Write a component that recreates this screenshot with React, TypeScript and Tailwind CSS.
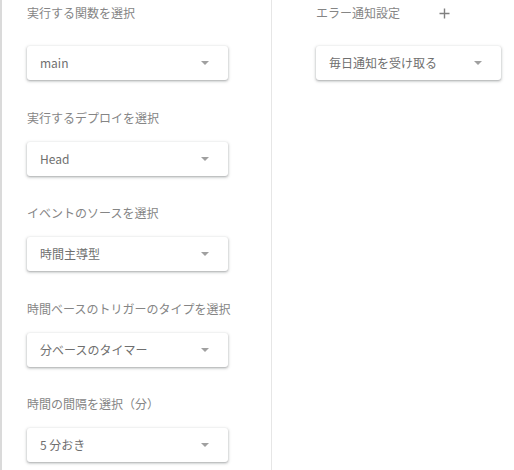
import React from "react";

const font = { fontFamily: '"Noto Sans CJK JP", "Noto Sans", sans-serif' };

function Select({ value, width }: { value: string; width: string }) {
  return (
    <div
      className={`${width} h-[34px] flex items-center justify-between rounded-[3px] bg-white pl-[13px] pr-[19px] shadow-[0_1px_2px_rgba(60,64,67,0.3),0_1px_3px_1px_rgba(60,64,67,0.15)]`}
    >
      <span className="text-[12px] leading-[16px] text-[#6f6f6f]">{value}</span>
      <span className="w-0 h-0 border-l-[4px] border-r-[4px] border-t-[4px] border-l-transparent border-r-transparent border-t-[#a0a0a0]" />
    </div>
  );
}

function Label({ children }: { children: React.ReactNode }) {
  return <div className="text-[12px] leading-[16px] text-[#858585]">{children}</div>;
}

export default function App() {
  const sections: [string, string][] = [
    ["実行するデプロイを選択", "Head"],
    ["イベントのソースを選択", "時間主導型"],
    ["時間ベースのトリガーのタイプを選択", "分ベースのタイマー"],
    ["時間の間隔を選択（分）", "5 分おき"],
  ];
  return (
    <div className="w-[514px] h-[470px] bg-white flex overflow-hidden" style={font}>
      <div className="w-[2px] bg-[#dadada]" />
      <div className="w-[270px] border-r border-[#e6e6e6] pl-[25px] pt-[5px]">
        <Label>実行する関数を選択</Label>
        <div className="mt-[25px]">
          <Select value="main" width="w-[201px]" />
        </div>
        {sections.map(([l, v]) => (
          <div key={l} className="mt-[29.5px]">
            <Label>{l}</Label>
            <div className="mt-[16px]">
              <Select value={v} width="w-[201px]" />
            </div>
          </div>
        ))}
      </div>
      <div className="flex-1 pl-[44px] pt-[5px]">
        <div className="flex items-center h-[16px]">
          <Label>エラー通知設定</Label>
          <svg className="ml-[39px]" width="11" height="11" viewBox="0 0 11 11">
            <path d="M5.5 0.5v10M0.5 5.5h10" stroke="#808080" strokeWidth="1.4" />
          </svg>
        </div>
        <div className="mt-[25px]">
          <Select value="毎日通知を受け取る" width="w-[185px]" />
        </div>
      </div>
    </div>
  );
}
